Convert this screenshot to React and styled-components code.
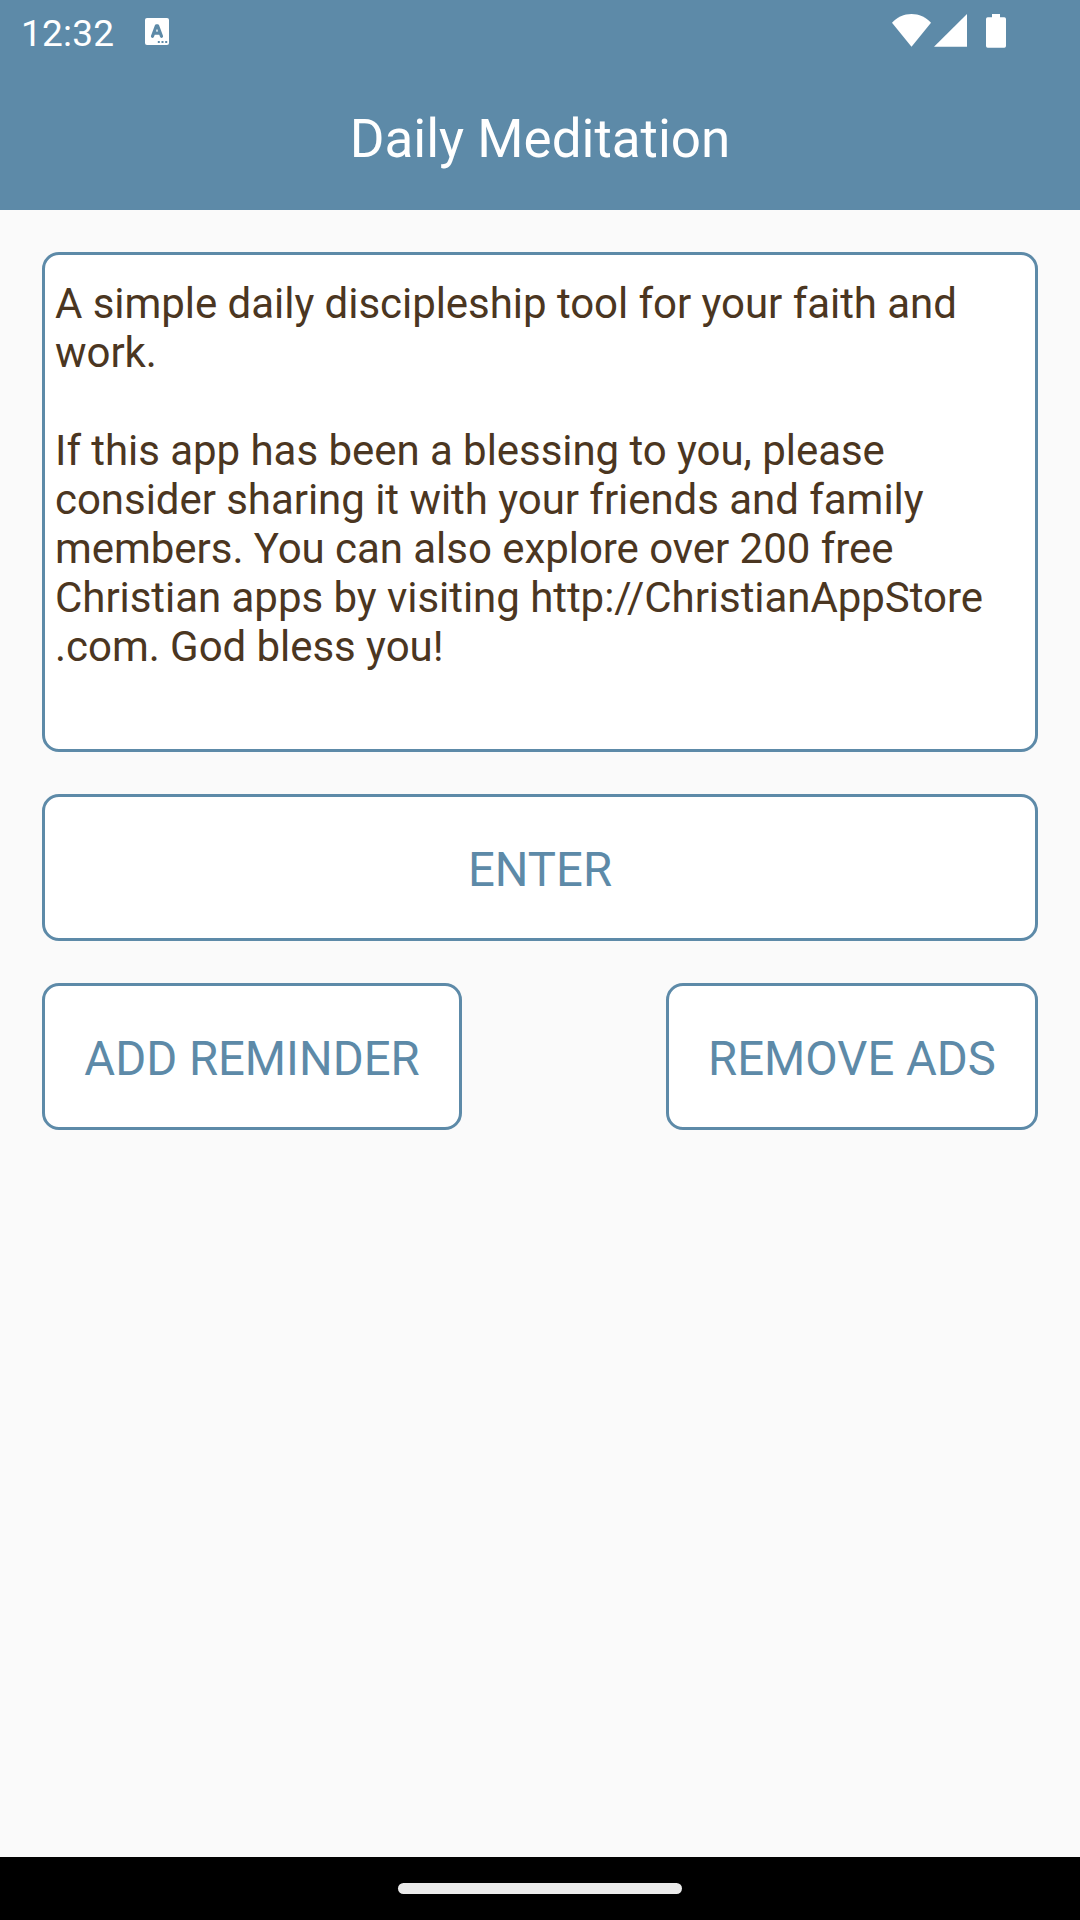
import styled, {createGlobalStyle} from "styled-components";

export default function App() {
  return (
    <>
      <GlobalStyle />
      <StyledScreen>
        <StyledStatusBar>
          <StyledTime>12:32</StyledTime>
          <KeyboardIcon />
          <StyledSystemIcons>
            <WifiIcon />
            <SignalIcon />
            <BatteryIcon />
          </StyledSystemIcons>
        </StyledStatusBar>
        <StyledHeader>
          <StyledTitle>Daily Meditation</StyledTitle>
        </StyledHeader>
        <StyledMain>
          <StyledCard>
            <StyledText>
              A simple daily discipleship tool for your faith and
              <br />
              work.
            </StyledText>
            <StyledText>
              If this app has been a blessing to you, please
              <br />
              consider sharing it with your friends and family
              <br />
              members. You can also explore over 200 free
              <br />
              Christian apps by visiting http://ChristianAppStore
              <br />
              .com. God bless you!
            </StyledText>
          </StyledCard>
          <StyledButton $width="100%">ENTER</StyledButton>
          <StyledButtonRow>
            <StyledButton $width="420px">ADD REMINDER</StyledButton>
            <StyledButton $width="372px">REMOVE ADS</StyledButton>
          </StyledButtonRow>
        </StyledMain>
        <StyledNavigation>
          <StyledHandle />
        </StyledNavigation>
      </StyledScreen>
    </>
  );
}

function KeyboardIcon() {
  return (
    <svg width="24" height="27" viewBox="0 0 24 27">
      <rect width="24" height="27" rx="2" fill="#fff" />
      <path
        d="M7.500 18.300L11.400 7.800h1.200l3.900 10.500M9.200 15.200h5.600"
        fill="none"
        stroke="#5d8aa8"
        strokeWidth="3.200"
        strokeLinecap="round"
        strokeLinejoin="round"
      />
      <path
        d="M12.800 23h2v2h-2zM16.500 23h2v2h-2zM20.200 23h2v2h-2z"
        fill="#5d8aa8"
      />
    </svg>
  );
}

function WifiIcon() {
  return (
    <svg width="39" height="33" viewBox="0 0 39 33">
      <path
        d="M0 8.800C5.200 3.200 12 0 19.500 0S33.800 3.200 39 8.800L19.500 32.800z"
        fill="#fff"
      />
    </svg>
  );
}

function SignalIcon() {
  return (
    <svg width="33" height="33" viewBox="0 0 33 33">
      <path d="M33 0v32.800H0z" fill="#fff" />
    </svg>
  );
}

function BatteryIcon() {
  return (
    <svg width="20" height="34" viewBox="0 0 20 34">
      <path
        d="M6 0h8v3.300h4.300q1.700 0 1.700 1.700v27q0 1.800-1.700 1.800H1.700Q0 33.800 0 32V5q0-1.700 1.700-1.700H6z"
        fill="#fff"
      />
    </svg>
  );
}

const GlobalStyle = createGlobalStyle`
  * {
    box-sizing: border-box;
  }

  body {
    margin: 0;
    font-family: Roboto, "Liberation Sans", sans-serif;
  }
`;

const StyledScreen = styled.div`
  display: flex;
  flex-direction: column;
  width: 1080px;
  height: 1920px;
  background-color: #fafafa;
`;

const StyledStatusBar = styled.div`
  display: flex;
  align-items: flex-start;
  height: 63px;
  padding: 14px 74px 0 21px;
  background-color: #5d8aa8;

  > svg {
    margin-top: 4px;
  }
`;

const StyledTime = styled.span`
  width: 124px;
  margin-top: -2px;
  color: #fff;
  font-size: 37px;
  letter-spacing: 0.2px;
  line-height: 44px;
`;

const StyledSystemIcons = styled.div`
  display: flex;
  margin-left: auto;

  svg {
    margin-left: 3px;
  }

  svg:last-child {
    margin-left: 19px;
  }
`;

const StyledHeader = styled.header`
  display: flex;
  justify-content: center;
  height: 147px;
  padding-top: 44px;
  background-color: #5d8aa8;
`;

const StyledTitle = styled.h1`
  margin: 0;
  color: #fff;
  font-size: 53px;
  font-weight: 400;
  line-height: 64px;
`;

const StyledMain = styled.main`
  display: flex;
  flex: 1;
  flex-direction: column;
  gap: 42px;
  padding: 42px;
`;

const StyledCard = styled.section`
  height: 500px;
  padding: 24px 10px;
  border: 3px solid #5d8aa8;
  border-radius: 17px;
  background-color: #fff;
`;

const StyledText = styled.p`
  margin: 0 0 49px;
  color: #4b3621;
  font-size: 42px;
  letter-spacing: -0.045px;
  line-height: 49px;
  white-space: nowrap;
`;

const StyledButton = styled.button`
  width: ${props => props.$width};
  height: 147px;
  padding: 4px 0 0;
  border: 3px solid #5d8aa8;
  border-radius: 17px;
  background-color: #fff;
  color: #5d8aa8;
  font-family: inherit;
  font-size: 47.250px;
  line-height: 56px;
  white-space: nowrap;
`;

const StyledButtonRow = styled.div`
  display: flex;
  justify-content: space-between;
`;

const StyledNavigation = styled.footer`
  display: flex;
  justify-content: center;
  height: 63px;
  padding-top: 26px;
  background-color: #000;
`;

const StyledHandle = styled.div`
  width: 284px;
  height: 11px;
  border-radius: 6px;
  background-color: #ebebeb;
`;
